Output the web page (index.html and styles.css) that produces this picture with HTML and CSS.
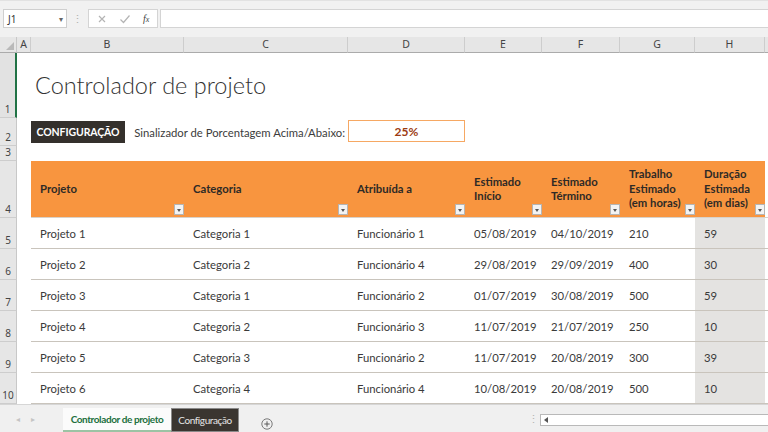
FILE: index.html
```html
<!DOCTYPE html>
<html lang="pt">
<head>
<meta charset="utf-8">
<title>Controlador de projeto</title>
<link rel="stylesheet" href="styles.css">
</head>
<body>
<div class="app">
  <div class="toolbar">
    <div class="namebox"><span>J1</span><span class="nb-arrow">▾</span></div>
    <div class="vdots">⋮</div>
    <div class="fxbox">
      <svg class="fxic" width="10" height="10" viewBox="0 0 10 10"><path d="M2 2L8 8M8 2L2 8" stroke="#b4b4b4" stroke-width="1.2" fill="none"/></svg>
      <svg class="fxic" width="12" height="10" viewBox="0 0 12 10"><path d="M1.5 5.5L4.5 8.5L10.5 1.5" stroke="#b4b4b4" stroke-width="1.2" fill="none"/></svg>
      <span class="fx">f<small>x</small></span>
    </div>
    <div class="formula"></div>
  </div>

  <div class="sheet">
    <div class="corner"><span class="tri"></span></div>
    <div class="colh">A</div>
    <div class="colh">B</div>
    <div class="colh">C</div>
    <div class="colh">D</div>
    <div class="colh">E</div>
    <div class="colh">F</div>
    <div class="colh">G</div>
    <div class="colh">H</div>
    <div class="colh blank"></div>

    <div class="rowh sel">1</div>
    <div class="title">Controlador de projeto</div>

    <div class="rowh">2</div>
    <div class="setting">
      <div class="btn">CONFIGURAÇÃO</div>
      <div class="label">Sinalizador de Porcentagem Acima/Abaixo:</div>
    </div>
    <div class="pct">25%</div>
    <div class="fill"></div>

    <div class="rowh">3</div>
    <div class="fill3"></div>

    <div class="rowh">4</div>
    <div class="a-cell"></div>
    <div class="th">Projeto<span class="flt"></span></div>
    <div class="th">Categoria<span class="flt"></span></div>
    <div class="th">Atribuída a<span class="flt"></span></div>
    <div class="th">Estimado<br>Início<span class="flt"></span></div>
    <div class="th">Estimado<br>Término<span class="flt"></span></div>
    <div class="th">Trabalho<br>Estimado<br>(em horas)<span class="flt"></span></div>
    <div class="th">Duração<br>Estimada<br>(em dias)<span class="flt"></span></div>
    <div class="edge"></div>

    <div class="rowh">5</div><div class="a-cell"></div>
    <div class="td">Projeto 1</div><div class="td">Categoria 1</div><div class="td">Funcionário 1</div><div class="td">05/08/2019</div><div class="td">04/10/2019</div><div class="td">210</div><div class="td gray">59</div><div class="td end"></div>

    <div class="rowh">6</div><div class="a-cell"></div>
    <div class="td">Projeto 2</div><div class="td">Categoria 2</div><div class="td">Funcionário 4</div><div class="td">29/08/2019</div><div class="td">29/09/2019</div><div class="td">400</div><div class="td gray">30</div><div class="td end"></div>

    <div class="rowh">7</div><div class="a-cell"></div>
    <div class="td">Projeto 3</div><div class="td">Categoria 1</div><div class="td">Funcionário 2</div><div class="td">01/07/2019</div><div class="td">30/08/2019</div><div class="td">500</div><div class="td gray">59</div><div class="td end"></div>

    <div class="rowh">8</div><div class="a-cell"></div>
    <div class="td">Projeto 4</div><div class="td">Categoria 2</div><div class="td">Funcionário 3</div><div class="td">11/07/2019</div><div class="td">21/07/2019</div><div class="td">250</div><div class="td gray">10</div><div class="td end"></div>

    <div class="rowh">9</div><div class="a-cell"></div>
    <div class="td">Projeto 5</div><div class="td">Categoria 3</div><div class="td">Funcionário 2</div><div class="td">11/07/2019</div><div class="td">20/08/2019</div><div class="td">300</div><div class="td gray">39</div><div class="td end"></div>

    <div class="rowh">10</div><div class="a-cell"></div>
    <div class="td">Projeto 6</div><div class="td">Categoria 4</div><div class="td">Funcionário 4</div><div class="td">10/08/2019</div><div class="td">20/08/2019</div><div class="td">500</div><div class="td gray">10</div><div class="td end"></div>
  </div>

  <div class="tabbar">
    <div class="navs"><span>◂</span><span>▸</span></div>
    <div class="tab active">Controlador de projeto</div>
    <div class="tab dark">Configuração</div>
    <div class="plus">
      <svg width="12" height="12" viewBox="0 0 12 12"><circle cx="6" cy="6" r="5.2" stroke="#7a7a7a" fill="none" stroke-width="1"/><path d="M6 3.3V8.7M3.3 6H8.7" stroke="#5a5a5a" stroke-width="1"/></svg>
    </div>
    <div class="spacer"></div>
    <div class="sdots">⋮</div>
    <div class="hscroll"><span class="larr"></span></div>
  </div>
</div>
</body>
</html>
```

FILE: styles.css
```css
* { box-sizing: border-box; margin: 0; padding: 0; }
body { width: 768px; height: 432px; overflow: hidden; background: #fff; font-family: "Lato", "Noto Sans", sans-serif; color: #3c3c3c; }
.app { display: flex; flex-direction: column; height: 432px; }

/* toolbar */
.toolbar { height: 37px; flex: none; background: #f1f1f1; display: flex; align-items: flex-start; padding-top: 8px; border-top: 1px solid #e2e2e2; }
.namebox { margin-left: 3px; width: 64px; height: 19px; background: #fff; border: 1px solid #cfcfcf; display: flex; align-items: center; justify-content: space-between; padding: 0 3px 0 4px; font: 10px "Noto Sans", sans-serif; color: #333; }
.nb-arrow { font-size: 8px; color: #666; }
.vdots { width: 21px; text-align: center; color: #b0b0b0; font: 11px "Noto Sans", sans-serif; line-height: 19px; }
.fxbox { width: 70px; height: 19px; background: #fff; border: 1px solid #d4d4d4; display: flex; align-items: center; padding-left: 8px; gap: 12px; }
.fx { font: italic 10px "Liberation Serif", serif; color: #444; }
.fx small { font-size: 8px; }
.formula { margin-left: 2px; flex: 1; height: 19px; background: #fff; border: 1px solid #d4d4d4; border-right: none; }

/* sheet */
.sheet { flex: none; height: 367px; display: grid; grid-template-columns: 17px 14px 153px 164px 117px 77px 78px 75px 70px 3px; grid-template-rows: 16px 65px 28px 15px 57px repeat(6, 31px); }
.corner { background: #e6e6e6; border-bottom: 1px solid #ababab; border-right: 1px solid #c8c8c8; position: relative; }
.tri { position: absolute; right: 2px; bottom: 2px; width: 0; height: 0; border-left: 8px solid transparent; border-bottom: 8px solid #b9b9b9; }
.colh { background: #e6e6e6; border-bottom: 1px solid #ababab; border-right: 1px solid #cdcdcd; font: 10.5px "Noto Sans", sans-serif; color: #444; text-align: center; line-height: 15px; }
.colh.blank { border-right: none; }
.rowh { grid-column: 1; background: #e6e6e6; border-bottom: 1px solid #cdcdcd; border-right: 1px solid #c8c8c8; font: 10px "Noto Sans", sans-serif; color: #444; display: flex; align-items: flex-end; justify-content: center; padding-bottom: 1px; }
.rowh.sel { border-right: 2px solid #217346; background: #e2e2e2; }

.title { grid-column: 3 / 11; font-size: 23.5px; font-weight: 300; line-height: 1; color: #333; padding: 21px 0 0 4px; }

.setting { grid-column: 3 / 5; display: flex; align-items: center; justify-content: space-between; padding-right: 3px; }
.btn { width: 94px; height: 22px; background: #34302c; color: #fff; font-weight: 700; font-size: 10.5px; display: flex; align-items: center; justify-content: center; letter-spacing: -0.1px; }
.label { font-size: 11.3px; color: #3c3c3c; }
.pct { grid-column: 5; align-self: center; height: 22px; border: 1px solid #f6a863; color: #9c3b12; font-weight: 700; font-size: 12px; display: flex; align-items: center; justify-content: center; margin-top: -2px; }
.fill { grid-column: 6 / 11; }
.fill3 { grid-column: 2 / 11; }

.a-cell { grid-column: 2; }
.th { background: #f8953f; color: #2e2a26; font-weight: 700; font-size: 11.3px; line-height: 14.5px; display: flex; align-items: center; padding-left: 9px; position: relative; border-bottom: 1px solid #d8d2ca; }
.edge { border-bottom: 1px solid #d8d2ca; }
.flt { position: absolute; right: 0; bottom: 2px; width: 10px; height: 11px; background: #f3f3f3; border: 1px solid #b5b5b5; }
.flt::after { content: ""; position: absolute; left: 2px; top: 4px; border-left: 2px solid transparent; border-right: 2px solid transparent; border-top: 3px solid #555; }

.td { font-size: 11.3px; color: #3a3a3a; display: flex; align-items: center; padding-left: 9px; border-bottom: 1px solid #c9c4bc; }
.td.gray { background: #e4e3e1; }
.td.end { padding: 0; }

/* tab bar */
.tabbar { flex: 1; background: #f0f0f0; border-top: 1px solid #d6d6d6; display: flex; align-items: flex-start; padding-top: 3px; }
.navs { width: 63px; display: flex; gap: 11px; padding-left: 16px; color: #c4c4c4; font-size: 8px; line-height: 22px; }
.tab { height: 24px; display: flex; align-items: center; justify-content: center; font-size: 10px; letter-spacing: -0.4px; white-space: nowrap; }
.tab.active { width: 108px; background: #fbfbfb; color: #21703e; font-weight: 700; border-bottom: 2px solid #9cc3a4; }
.tab.dark { width: 68px; background: #3a3530; color: #e6e6e6; border: 1px solid #8a8a8a; }
.plus { margin-left: 22px; padding-top: 6px; }
.spacer { flex: 1; }
.sdots { color: #b4b4b4; font: 11px "Noto Sans", sans-serif; line-height: 22px; width: 12px; }
.hscroll { width: 228px; height: 12px; margin-top: 6px; background: #fff; border: 1px solid #b9b9b9; border-right: none; position: relative; }
.larr { position: absolute; left: 3px; top: 2px; border-top: 3px solid transparent; border-bottom: 3px solid transparent; border-right: 4px solid #555; }
```
